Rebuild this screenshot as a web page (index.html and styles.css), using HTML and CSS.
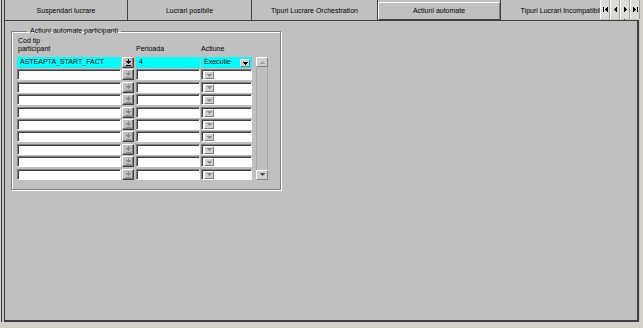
FILE: index.html
```html
<!DOCTYPE html>
<html lang="ro">
<head>
  <meta charset="UTF-8" />
  <title>Actiuni automate</title>
  <link rel="stylesheet" href="styles.css">
</head>
<body>

  <svg class="defs" width="0" height="0">
    <symbol id="i-pick" viewBox="0 0 5 7"><path d="M2 0h1v2h2v1h-1v1h-1v1h-1v-1h-1v-1h-1v-1h2z M0 6h5v1h-5z"/></symbol>
    <symbol id="i-down" viewBox="0 0 5 3"><path d="M0 0h5v1h-1v1h-1v1h-1v-1h-1v-1h-1z"/></symbol>
    <symbol id="i-up" viewBox="0 0 5 3"><path d="M2 0h1v1h1v1h1v1h-5v-1h1v-1h1z"/></symbol>
    <symbol id="i-left" viewBox="0 0 3 5"><path d="M3 0v5h-1v-1h-1v-1h-1v-1h1v-1h1v-1z"/></symbol>
    <symbol id="i-right" viewBox="0 0 3 5"><path d="M0 0v5h1v-1h1v-1h1v-1h-1v-1h-1v-1z"/></symbol>
  </svg>

  <div class="frame">
    <div class="tabs">
      <div class="tab">Suspendari lucrare</div>
      <div class="tab">Lucrari posibile</div>
      <div class="tab tab-wide">Tipuri Lucrare Orchestration</div>
      <div class="tab active"><span>Actiuni automate</span></div>
      <div class="tab">Tipuri Lucrari Incompatibile</div>

      <div class="tab-nav">
        <div class="nav-btn"><i class="bar"></i><svg width="3" height="5"><use href="#i-left"/></svg></div>
        <div class="nav-btn"><svg width="3" height="5"><use href="#i-left"/></svg></div>
        <div class="nav-btn"><svg width="3" height="5"><use href="#i-right"/></svg></div>
        <div class="nav-btn"><svg width="3" height="5"><use href="#i-right"/></svg><i class="bar"></i></div>
      </div>
    </div>

    <div class="panel">
      <fieldset class="group">
        <legend>Actiuni automate participanti</legend>

        <div class="head">
          <div class="h-cod">Cod tip<br>participant</div>
          <div class="h-per">Perioada</div>
          <div class="h-act">Actiune</div>
        </div>

        <div class="grid">
          <div class="rows">
            <div class="row current">
              <div class="field f-cod">ASTEAPTA_START_FACT</div>
              <div class="pick"><svg width="5" height="7"><use href="#i-pick"/></svg></div>
              <div class="field f-per">4</div>
              <div class="field f-act">Executie<span class="drop"><svg width="5" height="3"><use href="#i-down"/></svg></span></div>
            </div>
            <div class="row">
              <div class="field f-cod"></div>
              <div class="pick"><svg width="5" height="7"><use href="#i-pick"/></svg></div>
              <div class="field f-per"></div>
              <div class="field f-act"><span class="drop"><svg width="5" height="3"><use href="#i-down"/></svg></span></div>
            </div>
            <div class="row">
              <div class="field f-cod"></div>
              <div class="pick"><svg width="5" height="7"><use href="#i-pick"/></svg></div>
              <div class="field f-per"></div>
              <div class="field f-act"><span class="drop"><svg width="5" height="3"><use href="#i-down"/></svg></span></div>
            </div>
            <div class="row">
              <div class="field f-cod"></div>
              <div class="pick"><svg width="5" height="7"><use href="#i-pick"/></svg></div>
              <div class="field f-per"></div>
              <div class="field f-act"><span class="drop"><svg width="5" height="3"><use href="#i-down"/></svg></span></div>
            </div>
            <div class="row">
              <div class="field f-cod"></div>
              <div class="pick"><svg width="5" height="7"><use href="#i-pick"/></svg></div>
              <div class="field f-per"></div>
              <div class="field f-act"><span class="drop"><svg width="5" height="3"><use href="#i-down"/></svg></span></div>
            </div>
            <div class="row">
              <div class="field f-cod"></div>
              <div class="pick"><svg width="5" height="7"><use href="#i-pick"/></svg></div>
              <div class="field f-per"></div>
              <div class="field f-act"><span class="drop"><svg width="5" height="3"><use href="#i-down"/></svg></span></div>
            </div>
            <div class="row">
              <div class="field f-cod"></div>
              <div class="pick"><svg width="5" height="7"><use href="#i-pick"/></svg></div>
              <div class="field f-per"></div>
              <div class="field f-act"><span class="drop"><svg width="5" height="3"><use href="#i-down"/></svg></span></div>
            </div>
            <div class="row">
              <div class="field f-cod"></div>
              <div class="pick"><svg width="5" height="7"><use href="#i-pick"/></svg></div>
              <div class="field f-per"></div>
              <div class="field f-act"><span class="drop"><svg width="5" height="3"><use href="#i-down"/></svg></span></div>
            </div>
            <div class="row">
              <div class="field f-cod"></div>
              <div class="pick"><svg width="5" height="7"><use href="#i-pick"/></svg></div>
              <div class="field f-per"></div>
              <div class="field f-act"><span class="drop"><svg width="5" height="3"><use href="#i-down"/></svg></span></div>
            </div>
            <div class="row">
              <div class="field f-cod"></div>
              <div class="pick"><svg width="5" height="7"><use href="#i-pick"/></svg></div>
              <div class="field f-per"></div>
              <div class="field f-act"><span class="drop"><svg width="5" height="3"><use href="#i-down"/></svg></span></div>
            </div>
          </div>

          <div class="scroll">
            <div class="sbtn up"><svg width="5" height="3"><use href="#i-up"/></svg></div>
            <div class="sbtn down"><svg width="5" height="3"><use href="#i-down"/></svg></div>
          </div>
        </div>
      </fieldset>
    </div>
  </div>

</body>
</html>
```

FILE: styles.css
```css
body {
  margin: 0;
  width: 643px;
  height: 328px;
  overflow: hidden;
  background: #d4d0c8;
  font-family: 'Liberation Sans', Arial, sans-serif;
  font-size: 7px;
  line-height: 8px;
  color: #000;
}

.defs {
  position: absolute;
}

.frame {
  position: relative;
  width: 639px;
  height: 322px;
  margin-left: 1px;
  padding-left: 2px;
  box-sizing: border-box;
  border-left: 1px solid #404040;
  background: #c0c0c0;
}

/* tab strip */
.tabs {
  display: flex;
  height: 20px;
}

.tab {
  flex: 0 0 124px;
  box-sizing: border-box;
  display: flex;
  align-items: center;
  justify-content: center;
  padding-top: 1px;
  border-right: 1px solid #404040;
  white-space: nowrap;
  overflow: hidden;
}

.tab:first-child {
  border-left: 1px solid #404040;
}

.tab-wide {
  flex-basis: 126px;
}

.tab.active {
  flex-basis: 123px;
  align-items: stretch;
  padding: 2px 0 0 0;
}

.tab.active span {
  flex: 1;
  display: flex;
  align-items: center;
  justify-content: center;
  border: 1px solid;
  border-color: #fff #808080 #404040 #fff;
}

.tab-nav {
  position: absolute;
  left: 598px;
  top: 0;
  display: flex;
}

.nav-btn {
  width: 10px;
  height: 19px;
  box-sizing: border-box;
  display: flex;
  align-items: center;
  justify-content: center;
  gap: 1px;
  background: #dcdad4;
  border-left: 1px solid #fff;
  border-right: 1px solid #a0a0a0;
}

.nav-btn .bar {
  width: 1px;
  height: 5px;
  background: #000;
}

.nav-btn svg {
  fill: #000;
}

/* page body */
.panel {
  width: 635px;
  height: 302px;
  box-sizing: border-box;
  border-left: 1px solid #404040;
  border-top: 1px solid #404040;
  border-right: 2px solid #404040;
  border-bottom: 2px solid #404040;
  padding: 6px 0 0 6px;
}

.group {
  margin: 0;
  width: 270px;
  box-sizing: border-box;
  padding: 2px 10px 9px 5px;
  border: 1px solid #808080;
  box-shadow: inset 1px 1px 0 #fff, 1px 1px 0 #fff;
}

.group legend {
  margin-left: 10px;
  padding: 0 3px;
  line-height: 8px;
}

.head {
  display: flex;
  align-items: flex-end;
  margin-bottom: 4px;
}

.h-cod {
  width: 118px;
  padding-left: 1px;
}

.h-per {
  width: 65px;
}

.grid {
  display: flex;
}

.rows {
  display: flex;
  flex-direction: column;
  gap: 1.4px;
}

.row {
  display: flex;
  height: 11px;
}

.field {
  height: 11px;
  box-sizing: border-box;
  padding-left: 2px;
  background: #fff;
  border: 1px solid;
  border-color: #808080 #fff #fff #808080;
  box-shadow: inset 1px 1px 0 #404040;
  white-space: nowrap;
  overflow: hidden;
}

.f-cod {
  width: 104px;
  margin-right: 1px;
}

.f-per {
  width: 64px;
  margin-right: 1px;
}

.f-act {
  width: 51px;
  display: flex;
  justify-content: space-between;
  padding-right: 1px;
}

.row.current .field {
  background: #00ffff;
  border-color: #00ffff;
  box-shadow: none;
}

.pick {
  width: 12px;
  height: 11px;
  margin-right: 2px;
  box-sizing: border-box;
  display: flex;
  align-items: center;
  justify-content: center;
  background: #c0c0c0;
  border: 1px solid;
  border-color: #fff #404040 #404040 #fff;
  box-shadow: inset -1px -1px 0 #808080;
  fill: #8a8a8a;
}

.drop {
  width: 10px;
  height: 8px;
  margin-top: 1px;
  box-sizing: border-box;
  display: flex;
  align-items: center;
  justify-content: center;
  background: #d0d0d0;
  border: 1px solid;
  border-color: #fff #808080 #808080 #fff;
  fill: #909090;
}

.row.current .pick,
.row.current .drop {
  fill: #000;
}

.scroll {
  width: 12px;
  margin-left: 4px;
  display: flex;
  flex-direction: column;
  justify-content: space-between;
  box-shadow: inset 1px 0 0 #a8a8a8, inset -1px 0 0 #a8a8a8;
}

.sbtn {
  height: 10px;
  box-sizing: border-box;
  display: flex;
  align-items: center;
  justify-content: center;
  background: #d0d0d0;
  border: 1px solid;
  border-color: #fff #808080 #808080 #fff;
}

.sbtn.up {
  fill: #a0a0a0;
}

.sbtn.down {
  fill: #505050;
}
```
